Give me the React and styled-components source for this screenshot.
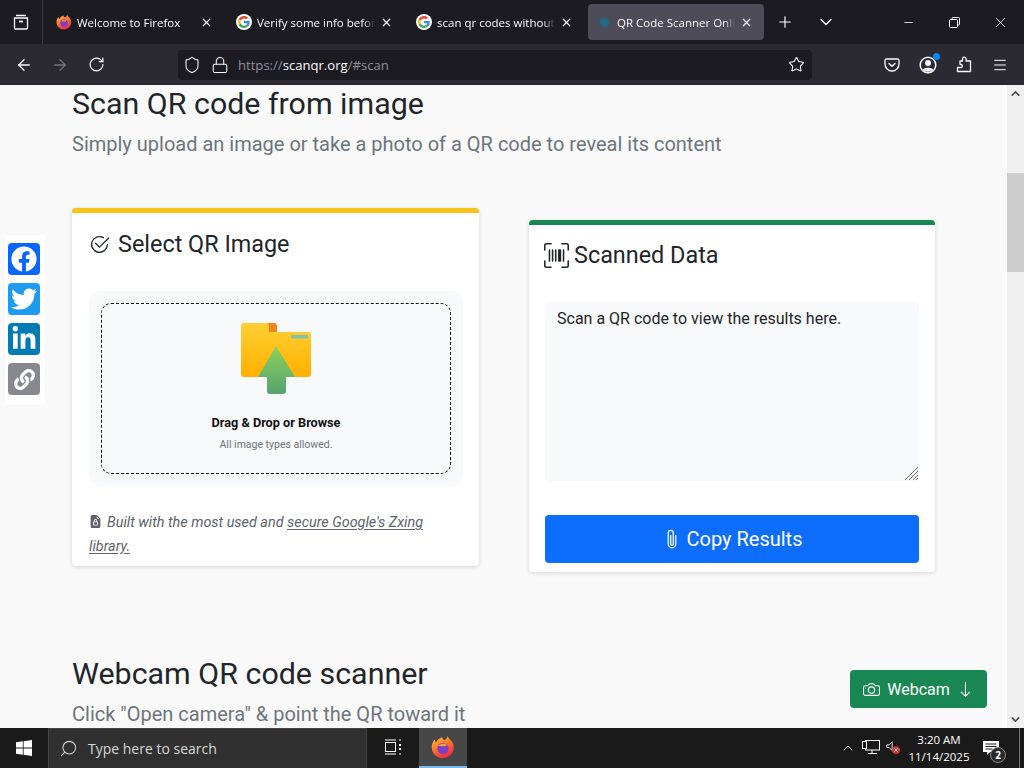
import React from "react";
import styled, { createGlobalStyle } from "styled-components";
import {
  X,
  Plus,
  ChevronDown,
  ChevronUp,
  Minus,
  ArrowLeft,
  ArrowRight,
  RotateCw,
  Shield,
  Lock,
  Star,
  Menu,
  Search,
} from "lucide-react";
import {
  BsCheck2Circle,
  BsUpcScan,
  BsPaperclip,
  BsCamera,
  BsArrowDown,
  BsFileEarmarkLockFill,
} from "react-icons/bs";
import { FaFacebook, FaTwitter, FaLinkedinIn, FaLink } from "react-icons/fa";

const GlobalStyle = createGlobalStyle`
  html, body {
    margin: 0;
    height: 100%;
    overflow: hidden;
    font-family: Roboto, "Liberation Sans", sans-serif;
  }
  * { box-sizing: border-box; }
`;

const Screen = styled.div`
  width: 1024px;
  height: 768px;
  display: flex;
  flex-direction: column;
  overflow: hidden;
`;

const TabBar = styled.div`
  height: 44px;
  flex: none;
  display: flex;
  align-items: center;
  background: #1c1b22;
  color: #fbfbfe;
`;

const ViewButton = styled.div`
  width: 43px;
  height: 44px;
  flex: none;
  margin-right: 5px;
  display: flex;
  align-items: center;
  justify-content: center;
  border-right: 1px solid #3a3944;
`;

const Tabs = styled.div`
  display: flex;
  gap: 4px;
`;

const Tab = styled.div`
  width: 176px;
  height: 36px;
  display: flex;
  align-items: center;
  gap: 5px;
  padding: 0 11px 0 8px;
  border-radius: 4px;
  background: ${(p) => (p.$active ? "#4d4c58" : "transparent")};
  font-family: "Open Sans", sans-serif;
  font-size: 11.5px;
`;

const TabTitle = styled.span`
  flex: 1;
  min-width: 0;
  white-space: nowrap;
  -webkit-mask-image: linear-gradient(to right, #000 90%, transparent);
  mask-image: linear-gradient(to right, #000 90%, transparent);
`;

const TabDot = styled.span`
  width: 16px;
  height: 16px;
  flex: none;
  display: flex;
  align-items: center;
  justify-content: center;
`;

const Dot = styled.span`
  width: 9px;
  height: 9px;
  border-radius: 50%;
  background: #1d6c8c;
  filter: blur(1px);
`;

const TabAction = styled.div`
  width: 41px;
  height: 44px;
  flex: none;
  display: flex;
  align-items: center;
  justify-content: center;
`;

const WindowButtons = styled.div`
  margin-left: auto;
  display: flex;
  padding-right: 1px;
`;

const WindowButton = styled.div`
  width: 46px;
  height: 44px;
  display: flex;
  align-items: center;
  justify-content: center;
`;

const NavBar = styled.div`
  height: 41px;
  flex: none;
  display: flex;
  align-items: center;
  padding-left: 6px;
  background: #2b2a33;
  color: #fbfbfe;
`;

const NavButton = styled.div`
  width: 36px;
  height: 36px;
  flex: none;
  display: flex;
  align-items: center;
  justify-content: center;
  opacity: ${(p) => (p.$dim ? 0.35 : 1)};
`;

const UrlBar = styled.div`
  width: 634px;
  height: 30px;
  margin: 0 62px 0 64px;
  flex: none;
  display: flex;
  align-items: center;
  gap: 10px;
  padding: 0 7px 0 5px;
  border-radius: 4px;
  background: #1c1b22;
`;

const UrlText = styled.div`
  flex: 1;
  margin-left: -1px;
  font-family: "Open Sans", sans-serif;
  font-size: 13.1px;
  color: #8f8f9d;
`;

const UrlHost = styled.span`
  color: #fbfbfe;
`;

const AccountWrap = styled.div`
  position: relative;
  width: 18px;
  height: 18px;
`;

const AccountBadge = styled.span`
  position: absolute;
  top: -3px;
  right: -3px;
  width: 7px;
  height: 7px;
  border-radius: 50%;
  background: #0a84ff;
`;

const Viewport = styled.div`
  position: relative;
  flex: 1;
  min-height: 0;
  display: flex;
  background: #f9f9fa;
  overflow: hidden;
`;

const Page = styled.main`
  flex: 1;
  min-width: 0;
  padding: 1px 0 0 72px;
  color: #212529;
`;

const Heading = styled.h2`
  margin: 0 0 7px;
  font-size: 30.4px;
  font-weight: 400;
  line-height: 36px;
`;

const Lead = styled.p`
  margin: 0;
  font-size: 20px;
  line-height: 30px;
  color: #6c757d;
`;

const Cards = styled.div`
  display: grid;
  grid-template-columns: 407px 406px;
  column-gap: 50px;
  align-items: start;
  margin: 49px 0 84px;
`;

const Card = styled.section`
  margin-top: ${(p) => p.$offset || 0}px;
  padding: ${(p) => p.$top}px 16px ${(p) => p.$bottom}px 17px;
  border-top: 5px solid ${(p) => p.$accent};
  border-radius: 4px;
  background: #fff;
  box-shadow: 0 1px 4px rgba(0, 0, 0, 0.16);
`;

const CardTitle = styled.h4`
  margin: 0 0 32px;
  display: flex;
  align-items: center;
  gap: ${(p) => p.$gap}px;
  font-size: 23.4px;
  font-weight: 400;
  line-height: 29px;
  color: #212529;
`;

const TitleIcon = styled.span`
  display: flex;
  margin-left: ${(p) => p.$shift}px;
`;

const DropOuter = styled.div`
  height: 195px;
  padding: 12px;
  border-radius: 12px;
  background: #f8f9fa;
`;

const DropInner = styled.div`
  height: 100%;
  display: flex;
  flex-direction: column;
  align-items: center;
  padding-top: 18px;
  border: 1px dashed #111;
  border-radius: 10px;
`;

const DropTitle = styled.div`
  margin-top: 19px;
  font-size: 12.7px;
  font-weight: 700;
  line-height: 16px;
  color: #111;
`;

const DropHint = styled.div`
  margin-top: 7px;
  font-size: 10.5px;
  line-height: 14px;
  color: #6c757d;
`;

const Note = styled.p`
  margin: 25px 0 0;
  font-size: 14.4px;
  font-style: italic;
  line-height: 24px;
  color: #5c636a;

  svg {
    margin-right: 5px;
    vertical-align: -1px;
  }
  u {
    text-underline-offset: 2px;
  }
`;

const ResultBox = styled.div`
  position: relative;
  height: 179px;
  margin-left: -1px;
  padding: 7px 12px;
  border-radius: 4px;
  background: #f8f9fa;
  font-size: 16px;
  line-height: 19px;
  color: #212529;
`;

const Grip = styled.svg`
  position: absolute;
  right: 0;
  bottom: 0;
`;

const CopyButton = styled.button`
  width: 374px;
  height: 48px;
  margin: 34px 0 0 -1px;
  display: flex;
  align-items: center;
  justify-content: center;
  gap: 5px;
  border: 0;
  border-radius: 4px;
  background: #0d6efd;
  color: #fff;
  font-family: inherit;
  font-size: 20px;
`;

const Scrollbar = styled.div`
  width: 17px;
  flex: none;
  display: flex;
  flex-direction: column;
  align-items: center;
  background: #f0f0f0;
  color: #505050;
`;

const ScrollArrow = styled.div`
  height: 17px;
  flex: none;
  display: flex;
  align-items: center;
  justify-content: center;
`;

const ScrollTrack = styled.div`
  flex: 1;
  width: 100%;
  padding-top: 71px;
`;

const ScrollThumb = styled.div`
  height: 99px;
  background: #cdcdcd;
`;

const ShareBar = styled.div`
  position: absolute;
  left: 5px;
  top: 150px;
  display: flex;
  flex-direction: column;
  gap: 8px;
  padding: 8px 5px 10px 3px;
  background: #fff;
`;

const ShareIcon = styled.a`
  width: 32px;
  height: 32px;
  display: flex;
  align-items: center;
  justify-content: center;
  border-radius: 4px;
  background: ${(p) => p.$bg};
  color: #fff;
`;

const WebcamButton = styled.button`
  position: absolute;
  left: 850px;
  top: 585px;
  width: 137px;
  height: 38px;
  display: flex;
  align-items: center;
  justify-content: center;
  gap: 7px;
  border: 0;
  border-radius: 4px;
  background: #198754;
  color: #fff;
  font-family: inherit;
  font-size: 16px;
`;

const Taskbar = styled.footer`
  height: 40px;
  flex: none;
  display: flex;
  align-items: center;
  background: #1a1a1a;
  color: #fff;
`;

const StartButton = styled.div`
  width: 48px;
  height: 40px;
  flex: none;
  display: flex;
  align-items: center;
  justify-content: center;
`;

const SearchBox = styled.div`
  width: 319px;
  height: 40px;
  flex: none;
  display: flex;
  align-items: center;
  gap: 10px;
  padding-left: 10px;
  background: #303030;
  border: 1px solid #444;
  border-width: 1px 1px 0;
  font-family: "Open Sans", sans-serif;
  font-size: 14px;
  color: #d8d8d8;
`;

const FlippedSearch = styled(Search)`
  transform: scaleX(-1);
`;

const TaskCell = styled.div`
  width: ${(p) => p.$width}px;
  height: 40px;
  flex: none;
  display: flex;
  align-items: center;
  justify-content: center;
  background: ${(p) => (p.$active ? "#474747" : "transparent")};
  border-bottom: 2px solid ${(p) => (p.$active ? "#76b9ed" : "transparent")};
`;

const Tray = styled.div`
  margin-left: auto;
  display: flex;
  align-items: center;
  height: 40px;
  padding-right: 4px;
`;

const Clock = styled.div`
  width: 76px;
  margin-left: 1px;
  font-family: "Open Sans", sans-serif;
  font-size: 11.5px;
  line-height: 17px;
  text-align: center;
`;

const NotifyWrap = styled.div`
  position: relative;
  width: 42px;
  height: 40px;
  display: flex;
  align-items: center;
  justify-content: center;
  padding-right: 16px;
  margin-left: 1px;
  border-right: 1px solid #777;
`;

const NotifyBadge = styled.span`
  position: absolute;
  right: 13px;
  bottom: 5px;
  width: 16px;
  height: 16px;
  display: flex;
  align-items: center;
  justify-content: center;
  border-radius: 50%;
  border: 1px solid #888;
  background: #2a2a2a;
  font-family: "Open Sans", sans-serif;
  font-size: 10px;
  font-weight: 700;
`;

function FirefoxLogo({ size = 16 }) {
  return (
    <svg width={size} height={size} viewBox="0 0 32 32">
      <defs>
        <linearGradient id={`fx${size}`} x1="0.2" y1="0" x2="0.7" y2="1">
          <stop offset="0" stopColor="#ffbd2e" />
          <stop offset="0.55" stopColor="#ff6a2b" />
          <stop offset="1" stopColor="#e3224e" />
        </linearGradient>
      </defs>
      <path
        d="M22 1c1 4 6 6 8 12 2 9-4 18-14 18C7 31 1 24 1 16c0-5 2-8 4-10 0 2 1 3 2 4 1-4 5-6 8-7 0 2 1 3 3 4 2-1 4-3 4-6z"
        fill={`url(#fx${size})`}
      />
      <circle cx="16" cy="18" r="7.5" fill="#7b3fc4" />
      <path d="M10 14c3-3 9-3 12 0-2 0-3 1-5 1-3 0-5 0-7-1z" fill="#ff9a3d" />
    </svg>
  );
}

function GoogleLogo() {
  return (
    <svg width="16" height="16" viewBox="0 0 48 48">
      <circle cx="24" cy="24" r="24" fill="#fff" />
      <g transform="translate(6 6) scale(0.75)">
        <path fill="#EA4335" d="M24 9.5c3.5 0 6.7 1.2 9.2 3.6l6.9-6.9C35.9 2.4 30.5 0 24 0 14.6 0 6.5 5.4 2.6 13.2l8 6.2C12.4 13.7 17.7 9.5 24 9.5z" />
        <path fill="#4285F4" d="M47 24.5c0-1.6-.1-3.100-.4-4.500H24v9h13c-.6 3-2.200 5.500-4.800 7.200l7.700 6c4.500-4.200 7.100-10.300 7.100-17.700z" />
        <path fill="#FBBC05" d="M10.600 28.600a14.500 14.500 0 0 1 0-9.200l-8-6.200a24 24 0 0 0 0 21.600l8-6.200z" />
        <path fill="#34A853" d="M24 48c6.500 0 11.900-2.100 15.900-5.800l-7.700-6c-2.200 1.500-5 2.300-8.200 2.300-6.300 0-11.600-4.200-13.400-9.900l-8 6.200C6.500 42.600 14.600 48 24 48z" />
      </g>
    </svg>
  );
}

function FolderUpload() {
  return (
    <svg width="72" height="74" viewBox="0 0 72 74">
      <defs>
        <linearGradient id="folderBody" x1="0" y1="0" x2="0" y2="1">
          <stop offset="0" stopColor="#ffd034" />
          <stop offset="1" stopColor="#ffb000" />
        </linearGradient>
        <linearGradient id="folderArrow" x1="0" y1="0" x2="0" y2="1">
          <stop offset="0" stopColor="#8ed05a" />
          <stop offset="1" stopColor="#55a470" />
        </linearGradient>
      </defs>
      <path d="M24 1h10a3 3 0 0 1 3 3v8H24z" fill="#f0861d" />
      <path
        d="M1 4a3 3 0 0 1 3-3h22a3 3 0 0 1 3 3v6h39a3 3 0 0 1 3 3v39a3 3 0 0 1-3 3H4a3 3 0 0 1-3-3z"
        fill="url(#folderBody)"
      />
      <rect x="51" y="13" width="17" height="3.500" rx="1" fill="#7cc6b0" />
      <path
        d="M36 24 55 55H46v14a3 3 0 0 1-3 3H30a3 3 0 0 1-3-3V55H18z"
        fill="url(#folderArrow)"
      />
    </svg>
  );
}

function WindowsLogo() {
  return (
    <svg width="16" height="16" viewBox="0 0 16 16" fill="#fff">
      <path d="M0 2.300 6.800 1.300v6.300H0zM7.600 1.200 16 0v7.600H7.600zM0 8.400h6.800v6.300L0 13.700zM7.600 8.400H16V16l-8.400-1.200z" />
    </svg>
  );
}

function RestoreIcon() {
  return (
    <svg width="11" height="11" viewBox="0 0 11 11" fill="none" stroke="#fbfbfe">
      <rect x="0.500" y="2.500" width="8" height="8" rx="1" />
      <path d="M3 2.500V1.500a1 1 0 0 1 1-1h5.500a1 1 0 0 1 1 1V7a1 1 0 0 1-1 1h-1" />
    </svg>
  );
}

function FirefoxView() {
  return (
    <svg width="16" height="16" viewBox="0 0 16 16" fill="none" stroke="#fbfbfe" strokeWidth="1.300">
      <path d="M3 1.500h10M1.500 4h13v10a1 1 0 0 1-1 1h-11a1 1 0 0 1-1-1z" />
      <path d="M6 7.500h4" strokeWidth="1.800" />
    </svg>
  );
}

function PocketIcon() {
  return (
    <svg width="16" height="16" viewBox="0 0 16 16" fill="none" stroke="#fbfbfe" strokeWidth="1.300">
      <path d="M2.500 2h11A1.500 1.500 0 0 1 15 3.500V7a7 7 0 0 1-14 0V3.500A1.500 1.500 0 0 1 2.500 2z" />
      <path d="M5 6.500 8 9.300l3-2.800" strokeLinecap="round" />
    </svg>
  );
}

function AccountIcon() {
  return (
    <svg width="18" height="18" viewBox="0 0 18 18">
      <circle cx="9" cy="9" r="7.800" fill="none" stroke="#fbfbfe" strokeWidth="1.500" />
      <circle cx="9" cy="7" r="3" fill="#fbfbfe" />
      <path d="M3.800 13.500c2-2.500 8.400-2.500 10.400 0a7 7 0 0 1-10.400 0z" fill="#fbfbfe" />
    </svg>
  );
}

function ExtensionIcon() {
  return (
    <svg width="16" height="17" viewBox="0 0 16 17" fill="none" stroke="#fbfbfe" strokeWidth="1.300" strokeLinejoin="round">
      <path d="M6.500 5V3a1.800 1.800 0 0 1 3.600 0v2h4.400v10.500h-13v-4h3.200a1.600 1.600 0 0 0 0-3.200H4V5z" />
    </svg>
  );
}

function ResizeGrip() {
  return (
    <Grip width="15" height="15" viewBox="0 0 15 15" stroke="#6b6b6b" strokeWidth="1">
      <path d="M1 14 14 1M5 14 14 5M9 14l5-5M12 14l2-2" />
    </Grip>
  );
}

function TaskView() {
  return (
    <svg width="16" height="16" viewBox="0 0 16 16" fill="none" stroke="#fff" strokeWidth="1">
      <rect x="0.500" y="3.500" width="10" height="9" />
      <path d="M0 1h11M0 15h11M14 1h2M14 15h2" />
      <path d="M14 5h2v2h-2zM14 9h2v2h-2z" fill="#fff" stroke="none" />
    </svg>
  );
}

function NetworkIcon() {
  return (
    <svg width="18" height="16" viewBox="0 0 18 16" fill="none" stroke="#fff" strokeWidth="1">
      <rect x="3.500" y="1.500" width="14" height="9.500" />
      <path d="M10 11v3M6 14.500h9" />
      <rect x="0.500" y="2.500" width="4" height="7" fill="#1a1a1a" />
    </svg>
  );
}

function VolumeMuted() {
  return (
    <svg width="16" height="16" viewBox="0 0 16 16" fill="none" stroke="#fff" strokeWidth="1">
      <path d="M1 5.500h2.500L7 2v10L3.500 8.500H1z" />
      <circle cx="11.500" cy="11.500" r="4.500" fill="#d13438" stroke="none" />
      <path d="M9.800 9.800l3.400 3.400M13.200 9.800l-3.400 3.400" stroke="#fff" />
    </svg>
  );
}

function NotifyIcon() {
  return (
    <svg width="18" height="16" viewBox="0 0 18 16" fill="#fff">
      <path d="M1 1h16v11H8l-3 3v-3H1z" />
      <path d="M3.500 4h11M3.500 6.500h11M3.500 9h7" stroke="#1a1a1a" />
    </svg>
  );
}

const tabs = [
  { title: "Welcome to Firefox", icon: <FirefoxLogo /> },
  { title: "Verify some info before", icon: <GoogleLogo /> },
  { title: "scan qr codes without u", icon: <GoogleLogo /> },
  { title: "QR Code Scanner Onlin", icon: <Dot />, active: true },
];

export default function App() {
  return (
    <Screen>
      <GlobalStyle />
      <TabBar>
        <ViewButton>
          <FirefoxView />
        </ViewButton>
        <Tabs>
          {tabs.map((tab) => (
            <Tab key={tab.title} $active={tab.active}>
              <TabDot>{tab.icon}</TabDot>
              <TabTitle>{tab.title}</TabTitle>
              <X size={13} strokeWidth={2.2} />
            </Tab>
          ))}
        </Tabs>
        <TabAction>
          <Plus size={18} strokeWidth={1.6} />
        </TabAction>
        <TabAction>
          <ChevronDown size={20} strokeWidth={1.6} />
        </TabAction>
        <WindowButtons>
          <WindowButton>
            <Minus size={13} strokeWidth={1.5} />
          </WindowButton>
          <WindowButton>
            <RestoreIcon />
          </WindowButton>
          <WindowButton>
            <X size={17} strokeWidth={1.2} />
          </WindowButton>
        </WindowButtons>
      </TabBar>
      <NavBar>
        <NavButton>
          <ArrowLeft size={18} strokeWidth={1.7} />
        </NavButton>
        <NavButton $dim>
          <ArrowRight size={18} strokeWidth={1.7} />
        </NavButton>
        <NavButton>
          <RotateCw size={17} strokeWidth={1.7} />
        </NavButton>
        <UrlBar>
          <Shield size={18} strokeWidth={1.4} />
          <Lock size={18} strokeWidth={1.4} />
          <UrlText>
            https://<UrlHost>scanqr.org</UrlHost>/#scan
          </UrlText>
          <Star size={17} strokeWidth={1.5} />
        </UrlBar>
        <NavButton>
          <PocketIcon />
        </NavButton>
        <NavButton>
          <AccountWrap>
            <AccountIcon />
            <AccountBadge />
          </AccountWrap>
        </NavButton>
        <NavButton>
          <ExtensionIcon />
        </NavButton>
        <NavButton>
          <Menu size={16} strokeWidth={1.5} />
        </NavButton>
      </NavBar>
      <Viewport>
        <Page>
          <Heading>Scan QR code from image</Heading>
          <Lead>Simply upload an image or take a photo of a QR code to reveal its content</Lead>
          <Cards>
            <Card $accent="#f5c518" $top={17} $bottom={7}>
              <CardTitle $gap={8}>
                <TitleIcon $shift={0}>
                  <BsCheck2Circle size={21} />
                </TitleIcon>
                Select QR Image
              </CardTitle>
              <DropOuter>
                <DropInner>
                  <FolderUpload />
                  <DropTitle>Drag &amp; Drop or Browse</DropTitle>
                  <DropHint>All image types allowed.</DropHint>
                </DropInner>
              </DropOuter>
              <Note>
                <BsFileEarmarkLockFill size={13} />
                Built with the most used and <u>secure Google's Zxing library.</u>
              </Note>
            </Card>
            <Card $accent="#198754" $offset={12} $top={16} $bottom={9}>
              <CardTitle $gap={5}>
                <TitleIcon $shift={-2}>
                  <BsUpcScan size={25} />
                </TitleIcon>
                Scanned Data
              </CardTitle>
              <ResultBox>
                Scan a QR code to view the results here.
                <ResizeGrip />
              </ResultBox>
              <CopyButton>
                <BsPaperclip size={20} />
                Copy Results
              </CopyButton>
            </Card>
          </Cards>
          <Heading>Webcam QR code scanner</Heading>
          <Lead>Click "Open camera" &amp; point the QR toward it</Lead>
        </Page>
        <Scrollbar>
          <ScrollArrow>
            <ChevronUp size={13} strokeWidth={3} />
          </ScrollArrow>
          <ScrollTrack>
            <ScrollThumb />
          </ScrollTrack>
          <ScrollArrow>
            <ChevronDown size={13} strokeWidth={3} />
          </ScrollArrow>
        </Scrollbar>
        <ShareBar>
          <ShareIcon $bg="#0866ff">
            <FaFacebook size={26} />
          </ShareIcon>
          <ShareIcon $bg="#1d9bf0">
            <FaTwitter size={26} />
          </ShareIcon>
          <ShareIcon $bg="#007bb5">
            <FaLinkedinIn size={26} />
          </ShareIcon>
          <ShareIcon $bg="#888990">
            <FaLink size={21} />
          </ShareIcon>
        </ShareBar>
        <WebcamButton>
          <BsCamera size={17} />
          Webcam
          <BsArrowDown size={17} />
        </WebcamButton>
      </Viewport>
      <Taskbar>
        <StartButton>
          <WindowsLogo />
        </StartButton>
        <SearchBox>
          <FlippedSearch size={19} strokeWidth={1.3} />
          Type here to search
        </SearchBox>
        <TaskCell $width={52}>
          <TaskView />
        </TaskCell>
        <TaskCell $width={48} $active>
          <FirefoxLogo size={24} />
        </TaskCell>
        <Tray>
          <ChevronUp size={16} strokeWidth={1.4} />
          <TaskCell $width={30}>
            <NetworkIcon />
          </TaskCell>
          <TaskCell $width={14}>
            <VolumeMuted />
          </TaskCell>
          <Clock>
            3:20 AM
            <br />
            11/14/2025
          </Clock>
          <NotifyWrap>
            <NotifyIcon />
            <NotifyBadge>2</NotifyBadge>
          </NotifyWrap>
        </Tray>
      </Taskbar>
    </Screen>
  );
}
